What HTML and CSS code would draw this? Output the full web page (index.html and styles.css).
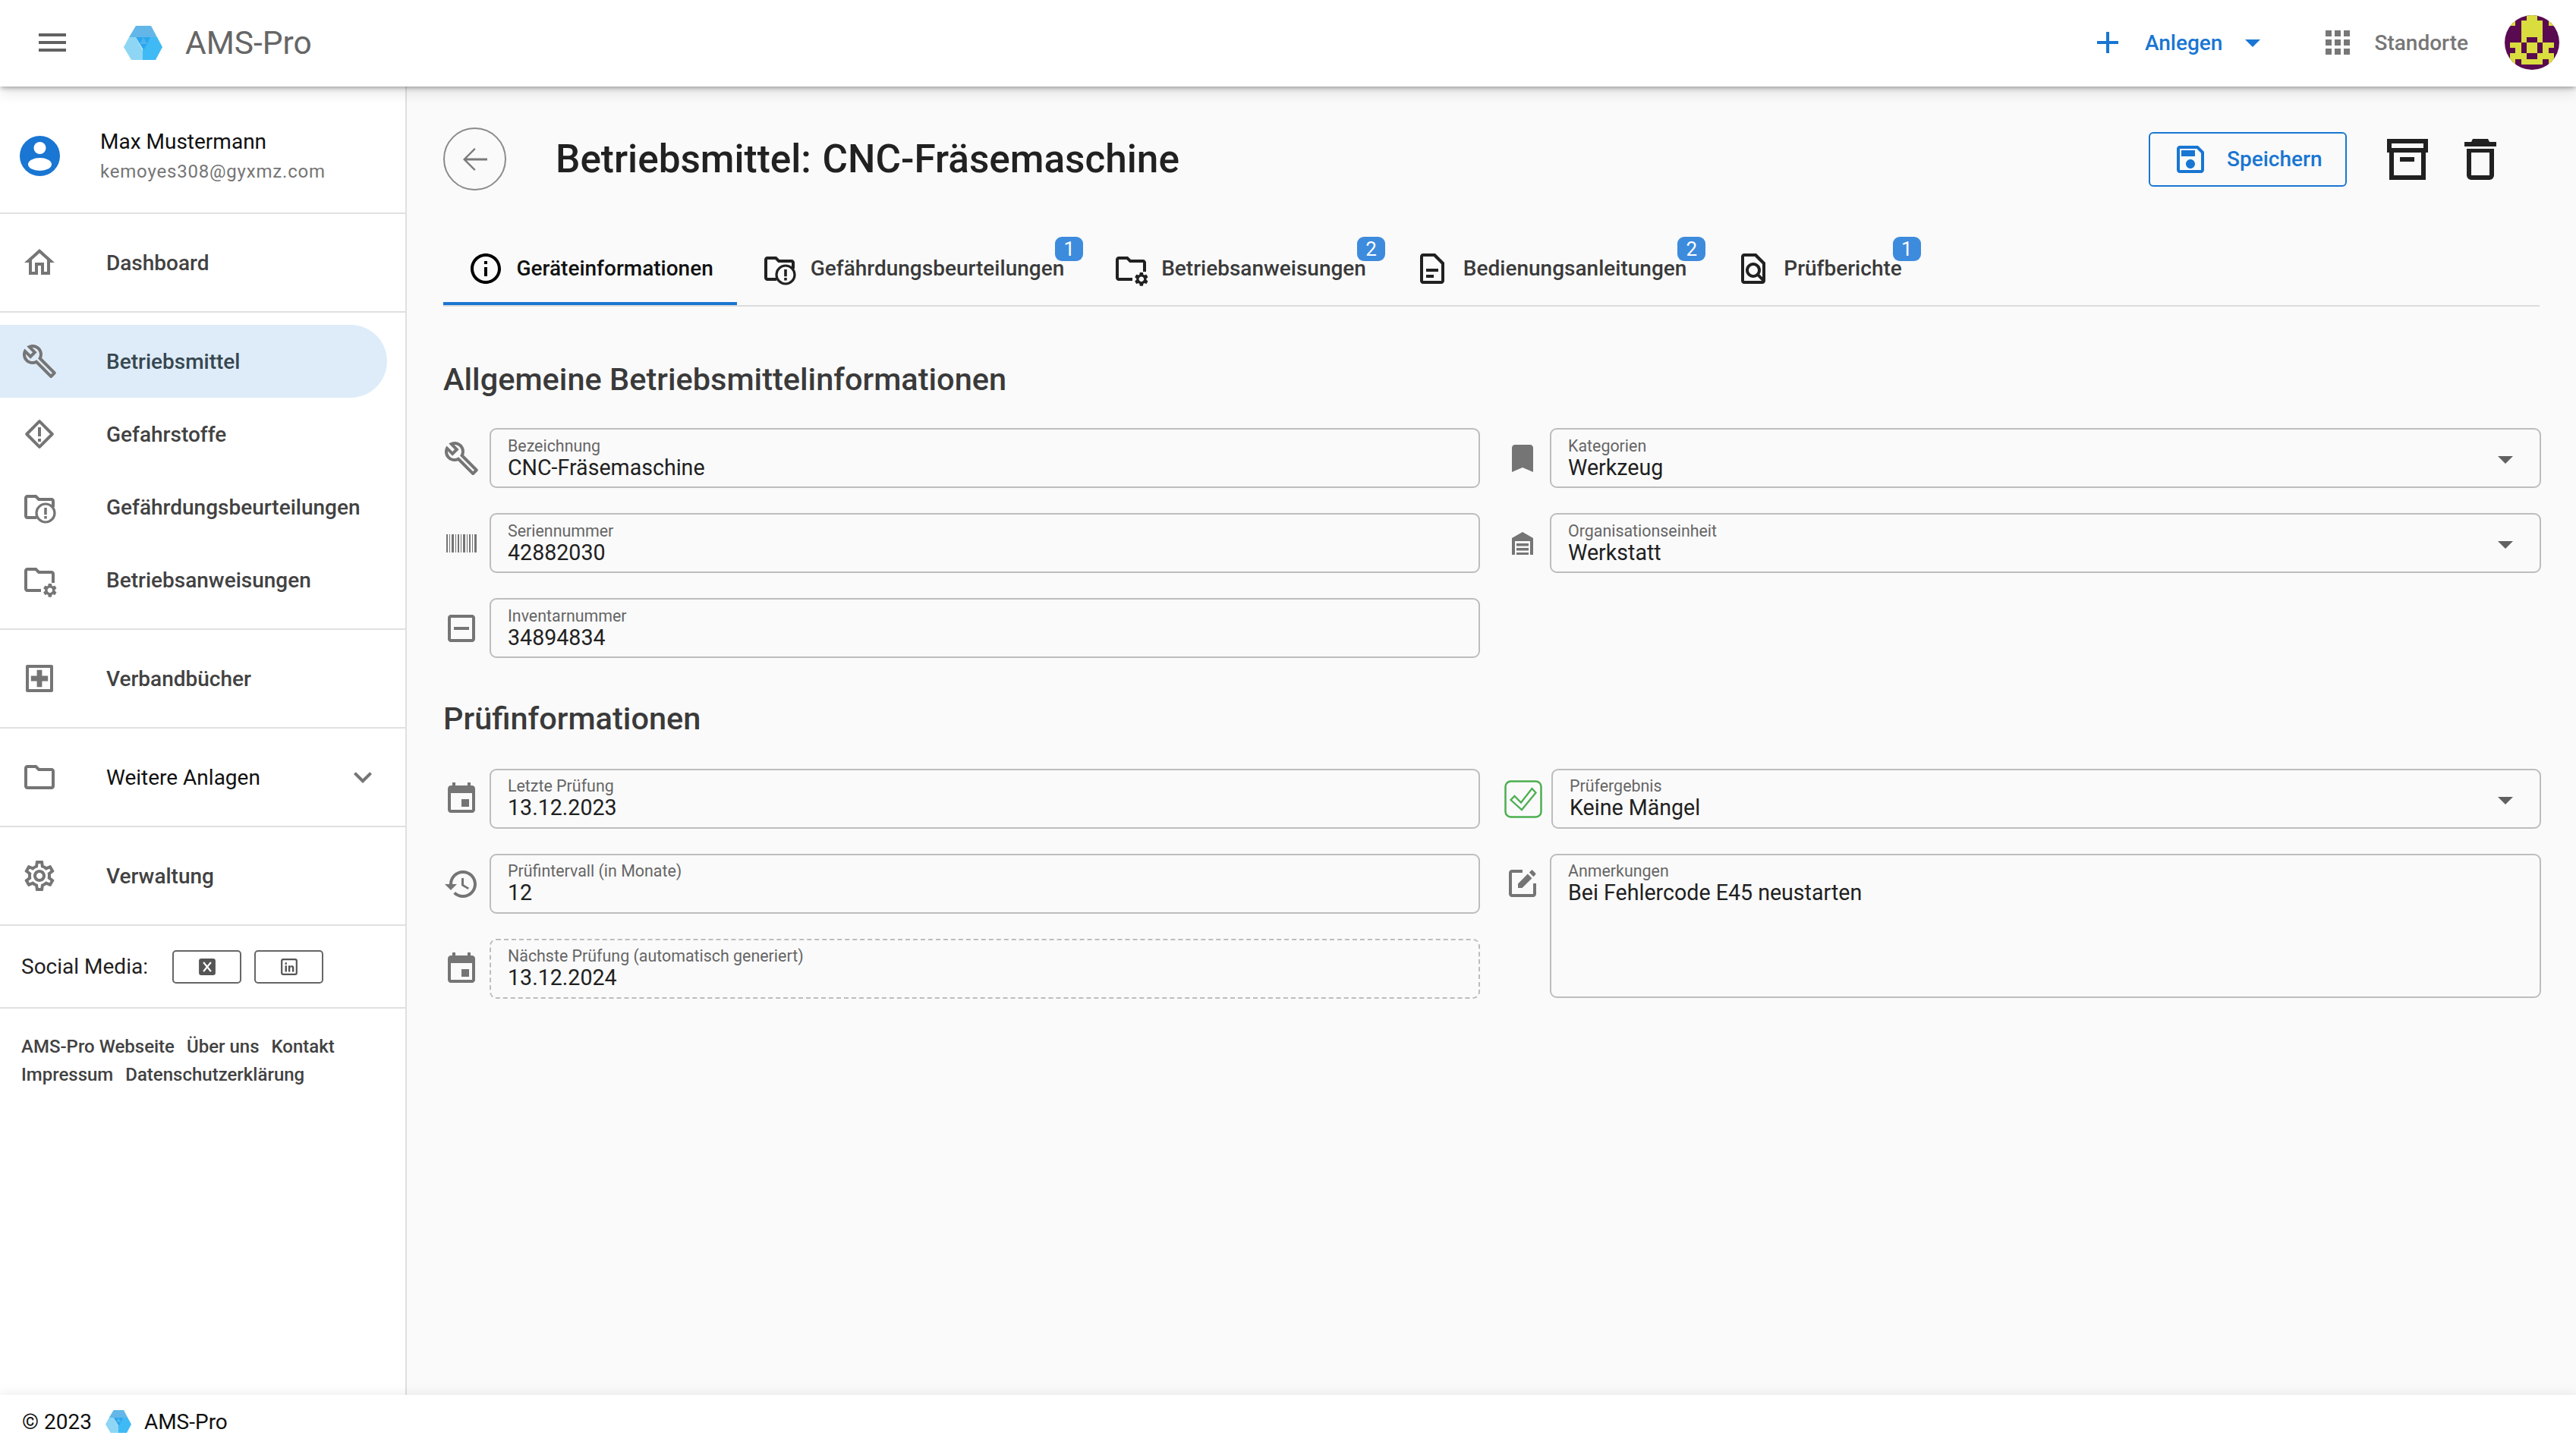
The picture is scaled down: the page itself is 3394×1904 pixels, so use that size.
FILE: index.html
```html
<!DOCTYPE html>
<html lang="de">
<head>
<meta charset="utf-8">
<title>AMS-Pro</title>
<link rel="stylesheet" href="styles.css">
</head>
<body>
<svg class="defs" aria-hidden="true">
  <symbol id="i-logo" viewBox="0 0 51 45">
    <polygon points="16,0 36,0 44,15 7,15" fill="#62b7e8"/>
    <polygon points="7,15 16,15 25,32 25,45 10,45 0,28" fill="#8ed6f4"/>
    <polygon points="44,15 36,15 25,32 25,45 42,45 51,28" fill="#3fbaf5"/>
    <polygon points="16,15 36,15 26,32" fill="#2ba6ef"/>
    <polygon points="26,15 31,24 21,24" fill="#4db4ee"/>
  </symbol>
  <symbol id="i-build" viewBox="0 0 24 24"><path d="M22.61 18.99l-9.08-9.08c.93-2.34.45-5.1-1.44-7C9.79.61 6.21.4 3.66 2.26L7.5 6.11 6.08 7.52 2.25 3.69C.39 6.23.6 9.82 2.9 12.11c1.86 1.86 4.57 2.35 6.89 1.48l9.11 9.11c.39.39 1.02.39 1.41 0l2.3-2.3c.4-.38.4-1.01 0-1.41zm-3 1.6l-9.46-9.46c-.61.45-1.29.72-2 .82-1.36.2-2.79-.21-3.83-1.25C3.37 9.76 2.93 8.5 3 7.26l3.09 3.09 4.24-4.24-3.09-3.09c1.24-.07 2.49.37 3.44 1.31 1.08 1.08 1.49 2.57 1.24 3.96-.12.71-.42 1.37-.88 1.96l9.45 9.45-.88.88z"/></symbol>
  <symbol id="i-folder-alert" viewBox="0 0 24 24">
    <path d="M9.17 6l2 2H20v4h2V8c0-1.1-.9-2-2-2h-8l-2-2H4c-1.1 0-1.99.9-1.99 2L2 18c0 1.1.9 2 2 2h6v-2H4V6h5.17z"/>
    <circle cx="16" cy="16" r="6" fill="none" stroke="currentColor" stroke-width="1.6"/>
    <path d="M15.1 12.5h1.8v4.6h-1.8zM15.1 18h1.8v1.7h-1.8z"/>
  </symbol>
  <symbol id="i-folder-gear" viewBox="0 0 24 24">
    <path d="M9.17 6l2 2H20v6h2V8c0-1.1-.9-2-2-2h-8l-2-2H4c-1.1 0-1.99.9-1.99 2L2 18c0 1.1.9 2 2 2h9v-2H4V6h5.17z"/>
    <path transform="translate(13.4 13.4) scale(.46)" d="M19.14 12.94c.04-.3.06-.61.06-.94 0-.32-.02-.64-.07-.94l2.03-1.58c.18-.14.23-.41.12-.61l-1.92-3.32c-.12-.22-.37-.29-.59-.22l-2.39.96c-.5-.38-1.03-.7-1.62-.94l-.36-2.54c-.04-.24-.24-.41-.48-.41h-3.84c-.24 0-.43.17-.47.41l-.36 2.54c-.59.24-1.13.57-1.62.94l-2.39-.96c-.22-.08-.47 0-.59.22L2.74 8.87c-.12.21-.08.47.12.61l2.03 1.58c-.05.3-.09.63-.09.94s.02.64.07.94l-2.03 1.58c-.18.14-.23.41-.12.61l1.92 3.32c.12.22.37.29.59.22l2.39-.96c.5.38 1.03.7 1.62.94l.36 2.54c.05.24.24.41.48.41h3.84c.24 0 .44-.17.47-.41l.36-2.54c.59-.24 1.13-.56 1.62-.94l2.39.96c.22.08.47 0 .59-.22l1.92-3.32c.12-.22.07-.47-.12-.61l-2.01-1.58zM12 15.6c-1.98 0-3.6-1.62-3.6-3.6s1.62-3.6 3.6-3.6 3.6 1.62 3.6 3.6-1.62 3.6-3.6 3.6z"/>
  </symbol>
  <symbol id="i-calendar" viewBox="0 0 24 24"><path d="M17 12h-5v5h5v-5zM16 1v2H8V1H6v2H5c-1.11 0-1.99.9-1.99 2L3 19c0 1.1.89 2 2 2h14c1.1 0 2-.9 2-2V5c0-1.1-.9-2-2-2h-1V1h-2zm3 18H5V8h14v11z"/></symbol>
  <symbol id="i-drop" viewBox="0 0 24 24"><path d="M7 10l5 5 5-5z"/></symbol>
</svg>

<div class="app">
  <header class="topbar">
    <svg class="icon topbar-menu" viewBox="0 0 24 24"><path d="M3 18h18v-2H3v2zm0-5h18v-2H3v2zm0-7v2h18V6H3z"/></svg>
    <svg class="logo"><use href="#i-logo"/></svg>
    <span class="brand">AMS-Pro</span>
    <div class="create">
      <svg class="icon" viewBox="0 0 24 24"><path d="M19 13h-6v6h-2v-6H5v-2h6V5h2v6h6v2z"/></svg>
      <span class="create-label">Anlegen</span>
      <svg class="icon"><use href="#i-drop"/></svg>
    </div>
    <div class="places">
      <svg class="icon" viewBox="0 0 24 24"><path d="M4 8h4V4H4v4zm6 12h4v-4h-4v4zm-6 0h4v-4H4v4zm0-6h4v-4H4v4zm6 0h4v-4h-4v4zm6-10v4h4V4h-4zm-6 4h4V4h-4v4zm6 6h4v-4h-4v4zm0 6h4v-4h-4v4z"/></svg>
      <span>Standorte</span>
    </div>
    <svg class="avatar" viewBox="0 0 10 10" shape-rendering="crispEdges">
      <rect width="10" height="10" fill="#5a0a50"/>
      <path fill="#d9dd3e" d="M4 0h2v1h-2zM1 1h1v1h-1zM3 1h4v3h-4zM8 1h1v1h-1zM3 4h1v1h-1zM6 4h1v1h-1zM1 5h2v1h-2zM4 5h2v2h-2zM7 5h2v1h-2zM2 6h1v1h-1zM7 6h1v1h-1zM1 7h3v1h-3zM6 7h3v1h-3zM0 8h2v1h-2zM3 8h4v1h-4zM8 8h2v1h-2z"/>
    </svg>
  </header>

  <div class="middle">
    <aside class="sidebar">
      <div class="profile">
        <svg class="profile-icon" viewBox="0 0 53 53">
          <circle cx="26.5" cy="26.5" r="26.5" fill="#1976d2"/>
          <circle cx="26.5" cy="16" r="8" fill="#fff"/>
          <ellipse cx="26.5" cy="37.5" rx="15.5" ry="8.5" fill="#fff"/>
        </svg>
        <div class="profile-text">
          <div class="profile-name">Max Mustermann</div>
          <div class="profile-mail">kemoyes308@gyxmz.com</div>
        </div>
      </div>

      <nav class="nav-group">
        <a class="nav-item"><svg class="icon" viewBox="0 0 24 24"><path d="M12 5.69l5 4.5V18h-2v-6H9v6H7v-7.81l5-4.5M12 3L2 12h3v8h6v-6h2v6h6v-8h3L12 3z"/></svg><span>Dashboard</span></a>
      </nav>
      <nav class="nav-group">
        <a class="nav-item is-active"><svg class="icon icon-wrench"><use href="#i-build"/></svg><span>Betriebsmittel</span></a>
        <a class="nav-item"><svg class="icon" viewBox="0 0 24 24"><path d="M12 3.6 20.4 12 12 20.4 3.6 12z" fill="none" stroke="currentColor" stroke-width="2" stroke-linejoin="round"/><path d="M11 7.5h2v6h-2zM11 15h2v2h-2z"/></svg><span>Gefahrstoffe</span></a>
        <a class="nav-item"><svg class="icon"><use href="#i-folder-alert"/></svg><span>Gefährdungsbeurteilungen</span></a>
        <a class="nav-item"><svg class="icon"><use href="#i-folder-gear"/></svg><span>Betriebsanweisungen</span></a>
      </nav>
      <nav class="nav-group">
        <a class="nav-item"><svg class="icon" viewBox="0 0 24 24"><path d="M20 3H4c-.6 0-1 .4-1 1v16c0 .6.4 1 1 1h16c.6 0 1-.4 1-1V4c0-.6-.4-1-1-1zm-1 16H5V5h14v14z"/><path d="M10.3 6.4h3.4v3.9h3.9v3.4h-3.9v3.9h-3.4v-3.9H6.4v-3.4h3.9z"/></svg><span>Verbandbücher</span></a>
      </nav>
      <nav class="nav-group">
        <a class="nav-item is-plain"><svg class="icon" viewBox="0 0 24 24"><path d="M9.17 6l2 2H20v10H4V6h5.17M10 4H4c-1.1 0-1.99.9-1.99 2L2 18c0 1.1.9 2 2 2h16c1.1 0 2-.9 2-2V8c0-1.1-.9-2-2-2h-8l-2-2z"/></svg><span>Weitere Anlagen</span>
          <svg class="icon nav-chevron" viewBox="0 0 24 24"><path d="M16.59 8.59L12 13.17 7.41 8.59 6 10l6 6 6-6z"/></svg></a>
      </nav>
      <nav class="nav-group">
        <a class="nav-item"><svg class="icon" viewBox="0 0 24 24"><path d="M19.43 12.98c.04-.32.07-.64.07-.98 0-.34-.03-.66-.07-.98l2.11-1.65c.19-.15.24-.42.12-.64l-2-3.46c-.09-.16-.26-.25-.44-.25-.06 0-.12.01-.17.03l-2.49 1c-.52-.4-1.08-.73-1.69-.98l-.38-2.65C14.46 2.18 14.25 2 14 2h-4c-.25 0-.46.18-.49.42l-.38 2.65c-.61.25-1.17.59-1.69.98l-2.49-1c-.06-.02-.12-.03-.18-.03-.17 0-.34.09-.43.25l-2 3.46c-.13.22-.07.49.12.64l2.11 1.65c-.04.32-.07.65-.07.98 0 .33.03.66.07.98l-2.11 1.65c-.19.15-.24.42-.12.64l2 3.46c.09.16.26.25.44.25.06 0 .12-.01.17-.03l2.49-1c.52.4 1.08.73 1.69.98l.38 2.65c.03.24.24.42.49.42h4c.25 0 .46-.18.49-.42l.38-2.65c.61-.25 1.17-.59 1.69-.98l2.49 1c.06.02.12.03.18.03.17 0 .34-.09.43-.25l2-3.46c.12-.22.07-.49-.12-.64l-2.11-1.65zm-1.98-1.71c.04.31.05.52.05.73 0 .21-.02.43-.05.73l-.14 1.13.89.7 1.08.84-.7 1.21-1.27-.51-1.04-.42-.9.68c-.43.32-.84.56-1.25.73l-1.06.43-.16 1.13-.2 1.35h-1.4l-.19-1.35-.16-1.13-1.06-.43c-.43-.18-.83-.41-1.23-.71l-.91-.7-1.06.43-1.27.51-.7-1.21 1.08-.84.89-.7-.14-1.13c-.03-.31-.05-.54-.05-.74s.02-.43.05-.73l.14-1.13-.89-.7-1.08-.84.7-1.21 1.27.51 1.04.42.9-.68c.43-.32.84-.56 1.25-.73l1.06-.43.16-1.13.2-1.35h1.39l.19 1.35.16 1.13 1.06.43c.43.18.83.41 1.23.71l.91.7 1.06-.43 1.27-.51.7 1.21-1.07.85-.89.7.14 1.13zM12 8c-2.21 0-4 1.79-4 4s1.79 4 4 4 4-1.79 4-4-1.79-4-4-4zm0 6c-1.1 0-2-.9-2-2s.9-2 2-2 2 .9 2 2-.9 2-2 2z"/></svg><span>Verwaltung</span></a>
      </nav>

      <div class="social">
        <span class="social-label">Social Media:</span>
        <span class="social-btn"><svg class="social-icon" viewBox="0 0 22 22"><rect x="1" y="1" width="20" height="20" rx="3" fill="#555"/><path d="M6.5 5.5 15.5 16.5M15.5 5.5 6.5 16.5" stroke="#fff" stroke-width="2"/></svg></span>
        <span class="social-btn"><svg class="social-icon" viewBox="0 0 22 22"><rect x="2" y="2" width="18" height="18" rx="2" fill="none" stroke="#555" stroke-width="2"/><path d="M6 9.5h2.2V17H6zM6 5.8h2.2V8H6zM10 9.5h2.2v1c.5-.7 1.3-1.2 2.2-1.2 1.7 0 2.4 1.1 2.4 2.9V17h-2.2v-4.4c0-.9-.3-1.4-1.1-1.4-.8 0-1.3.6-1.3 1.5V17H10z" fill="#555"/></svg></span>
      </div>
      <div class="links">
        <div class="links-line"><span>AMS-Pro Webseite</span><span>Über uns</span><span>Kontakt</span></div>
        <div class="links-line"><span>Impressum</span><span>Datenschutzerklärung</span></div>
      </div>
    </aside>

    <main class="content">
      <div class="toolbar">
        <span class="back"><svg class="icon" viewBox="0 0 24 24"><path d="M20 11.3H6.4l5.9-5.9-.8-.9L4 12l7.5 7.5.8-.9-5.9-5.9H20z"/></svg></span>
        <h1 class="title">Betriebsmittel: CNC-Fräsemaschine</h1>
        <button class="save" type="button">
          <svg class="icon" viewBox="0 0 24 24"><path d="M17 3H5c-1.11 0-2 .9-2 2v14c0 1.1.89 2 2 2h14c1.1 0 2-.9 2-2V7l-4-4zm2 16H5V5h11.17L19 7.83V19zm-7-7c-1.66 0-3 1.34-3 3s1.34 3 3 3 3-1.34 3-3-1.34-3-3-3zM6 6h9v4H6z"/></svg>
          <span>Speichern</span>
        </button>
        <svg class="tool-archive" viewBox="0 0 54 54"><path fill-rule="evenodd" d="M0 0H54V18H51V54H3V18H0ZM6 6V12H48V6ZM9 18V48H45V18Z"/><path d="M17 24H36V30H17Z"/></svg>
        <svg class="tool-trash" viewBox="0 0 42 54"><path d="M11 0H31L33 4H42V10H0V4H9Z"/><path fill-rule="evenodd" d="M3 13H39V48A6 6 0 0 1 33 54H9A6 6 0 0 1 3 48ZM9 18V48H33V18Z"/></svg>
      </div>

      <div class="tabs">
        <div class="tab is-active"><svg class="icon" viewBox="0 0 24 24"><path d="M11 7h2v2h-2zm0 4h2v6h-2zm1-9C6.48 2 2 6.48 2 12s4.48 10 10 10 10-4.48 10-10S17.52 2 12 2zm0 18c-4.41 0-8-3.59-8-8s3.59-8 8-8 8 3.59 8 8-3.59 8-8 8z"/></svg><span>Geräteinformationen</span></div>
        <div class="tab"><svg class="icon"><use href="#i-folder-alert"/></svg><span>Gefährdungsbeurteilungen</span><b class="badge">1</b></div>
        <div class="tab"><svg class="icon"><use href="#i-folder-gear"/></svg><span>Betriebsanweisungen</span><b class="badge">2</b></div>
        <div class="tab"><svg class="icon" viewBox="0 0 24 24"><path d="M14 2H6c-1.1 0-2 .9-2 2v16c0 1.1.89 2 1.99 2H18c1.1 0 2-.9 2-2V8l-6-6zm4 18H6V4h7l5 5v11z"/><path d="M8 12h8v2H8zM8 16h5v2H8z"/></svg><span>Bedienungsanleitungen</span><b class="badge">2</b></div>
        <div class="tab"><svg class="icon" viewBox="0 0 24 24"><path d="M14 2H6c-1.1 0-2 .9-2 2v16c0 1.1.9 2 2 2h12c1.1 0 2-.9 2-2V8l-6-6zM6 4h7l5 5v8.58l-1.84-1.84c1.28-1.94 1.07-4.57-.64-6.28C14.55 8.49 13.28 8 12 8s-2.55.49-3.53 1.46c-1.95 1.95-1.95 5.12 0 7.07.98.97 2.25 1.46 3.53 1.46.96 0 1.92-.28 2.75-.83L17.6 20H6V4zm8.11 11.1c-.56.56-1.31.88-2.11.88s-1.55-.31-2.11-.88c-.56-.56-.88-1.31-.88-2.11s.31-1.55.88-2.11c.56-.57 1.31-.88 2.11-.88s1.55.31 2.11.88c.56.56.88 1.31.88 2.11s-.31 1.55-.88 2.11z"/></svg><span>Prüfberichte</span><b class="badge">1</b></div>
      </div>

      <section class="section">
        <h2 class="section-title">Allgemeine Betriebsmittelinformationen</h2>
        <div class="form-grid">
          <div class="form-col">
            <div class="row">
              <svg class="icon icon-wrench"><use href="#i-build"/></svg>
              <div class="field"><label class="field-label">Bezeichnung</label><div class="field-value">CNC-Fräsemaschine</div></div>
            </div>
            <div class="row">
              <svg class="icon" viewBox="0 0 48 48"><path d="M4 12h2v24H4zM8 12h1v24H8zM11 12h3v24h-3zM16 12h1v24h-1zM19 12h2v24h-2zM23 12h1v24h-1zM26 12h3v24h-3zM31 12h1v24h-1zM34 12h2v24h-2zM38 12h1v24h-1zM41 12h3v24h-3z"/></svg>
              <div class="field"><label class="field-label">Seriennummer</label><div class="field-value">42882030</div></div>
            </div>
            <div class="row">
              <svg class="icon" viewBox="0 0 24 24"><path d="M19 3H5c-1.1 0-2 .9-2 2v14c0 1.1.9 2 2 2h14c1.1 0 2-.9 2-2V5c0-1.1-.9-2-2-2zm0 16H5V5h14v14zM7 11h10v2H7z"/></svg>
              <div class="field"><label class="field-label">Inventarnummer</label><div class="field-value">34894834</div></div>
            </div>
          </div>
          <div class="form-col form-col-right">
            <div class="row">
              <svg class="icon" viewBox="0 0 24 24"><path d="M17 3H7c-1.1 0-1.99.9-1.99 2L5 21l7-3 7 3V5c0-1.1-.9-2-2-2z"/></svg>
              <div class="field"><label class="field-label">Kategorien</label><div class="field-value">Werkzeug</div><svg class="icon field-arrow"><use href="#i-drop"/></svg></div>
            </div>
            <div class="row">
              <svg class="icon" viewBox="0 0 24 24"><path d="M12 4.5 19 8.5V19.5H17V10.5H7V19.5H5V8.5z"/><path d="M8 12h8v1.8H8zM8 15h8v1.8H8zM8 18h8v1.5H8z"/></svg>
              <div class="field"><label class="field-label">Organisationseinheit</label><div class="field-value">Werkstatt</div><svg class="icon field-arrow"><use href="#i-drop"/></svg></div>
            </div>
          </div>
        </div>
      </section>

      <section class="section section-next">
        <h2 class="section-title">Prüfinformationen</h2>
        <div class="form-grid">
          <div class="form-col">
            <div class="row">
              <svg class="icon"><use href="#i-calendar"/></svg>
              <div class="field field-tight"><label class="field-label">Letzte Prüfung</label><div class="field-value">13.12.2023</div></div>
            </div>
            <div class="row">
              <svg class="icon" viewBox="0 0 24 24"><path d="M13 3c-4.97 0-9 4.03-9 9H1l3.89 3.89.07.14L9 12H6c0-3.87 3.13-7 7-7s7 3.13 7 7-3.13 7-7 7c-1.93 0-3.68-.79-4.94-2.06l-1.42 1.42C8.27 19.99 10.51 21 13 21c4.97 0 9-4.03 9-9s-4.03-9-9-9zm-1 5v5l4.28 2.54.72-1.21-3.5-2.08V8H12z"/></svg>
              <div class="field field-tight"><label class="field-label">Prüfintervall (in Monate)</label><div class="field-value">12</div></div>
            </div>
            <div class="row">
              <svg class="icon"><use href="#i-calendar"/></svg>
              <div class="field field-tight field-dashed"><label class="field-label">Nächste Prüfung (automatisch generiert)</label><div class="field-value">13.12.2024</div></div>
            </div>
          </div>
          <div class="form-col form-col-right">
            <div class="row">
              <svg class="result-check" viewBox="0 0 50 50"><rect x="1.5" y="1.5" width="47" height="47" rx="7" fill="none" stroke="#4caf50" stroke-width="2.5"/><path d="M8.5 26 13.5 21 22 29.5 36.5 11 41.5 16.5 23 39z" fill="none" stroke="#4caf50" stroke-width="2.3"/></svg>
              <div class="field field-tight field-shift"><label class="field-label">Prüfergebnis</label><div class="field-value">Keine Mängel</div><svg class="icon field-arrow"><use href="#i-drop"/></svg></div>
            </div>
            <div class="row row-top">
              <svg class="icon" viewBox="0 0 24 24"><path d="M3 5v14c0 1.1.9 2 2 2h14c1.1 0 2-.9 2-2v-7h-2v7H5V5h7V3H5c-1.1 0-2 .9-2 2z"/><path d="M9 15h2.8l6.4-6.4-2.8-2.8L9 12.2zM19.2 7.6l1.3-1.3c.3-.3.3-.8 0-1.1L18.8 3.500c-.3-.3-.8-.3-1.1 0l-1.3 1.300z"/></svg>
              <div class="field field-tight field-area"><label class="field-label">Anmerkungen</label><div class="field-value">Bei Fehlercode E45 neustarten</div></div>
            </div>
          </div>
        </div>
      </section>
    </main>
  </div>

  <footer class="footer">
    <span>© 2023</span>
    <svg class="footer-logo"><use href="#i-logo"/></svg>
    <span>AMS-Pro</span>
  </footer>
</div>
</body>
</html>
```

FILE: styles.css
```css
* { box-sizing: border-box; }
html, body { margin: 0; padding: 0; background: #fff; }
body { font-family: Roboto, "Liberation Sans", sans-serif; font-size: 28px; color: #212121; }
.defs { display: none; }
.app { width: 3394px; height: 1904px; display: flex; flex-direction: column; overflow: hidden; }
.icon { width: 48px; height: 48px; flex: none; fill: currentColor; display: block; }

/* top bar */
.topbar { position: relative; z-index: 2; height: 114px; flex: none; display: flex; align-items: center; padding: 0 22px 2px 45px; background: #fff; box-shadow: 0 3px 6px -1px rgba(0,0,0,.32), 0 8px 18px rgba(0,0,0,.1); }
.topbar-menu { color: #616161; }
.logo { width: 51px; height: 45px; margin-left: 70px; flex: none; }
.brand { margin-left: 30px; font-size: 42.5px; color: #666; }
.create { margin-left: auto; display: flex; align-items: center; color: #1976d2; font-weight: 500; }
.create-label { margin: 0 16px 0 25px; }
.places { display: flex; align-items: center; gap: 24px; margin-left: 64px; color: #777; font-weight: 500; }
.avatar { width: 72px; height: 72px; border-radius: 50%; margin-left: 48px; flex: none; }

.middle { flex: 1; display: flex; min-height: 0; }

/* sidebar */
.sidebar { width: 536px; flex: none; background: #fff; border-right: 2px solid #e0e0e0; }
.profile { height: 168px; padding: 16px 0 0 26px; display: flex; align-items: center; gap: 53px; border-bottom: 2px solid #e0e0e0; }
.profile-icon { width: 53px; height: 53px; flex: none; }
.profile-text { padding-top: 2px; }
.profile-name { line-height: 40px; color: #111; }
.profile-mail { line-height: 38px; font-size: 24px; letter-spacing: .8px; color: #757575; }
.nav-group { padding: 16px 0; border-bottom: 2px solid #e0e0e0; }
.nav-item { height: 96px; margin-right: 24px; padding-left: 28px; display: flex; align-items: center; gap: 64px; font-weight: 500; color: #424242; border-radius: 0 48px 48px 0; }
.nav-item .icon { color: #757575; }
.nav-item.is-active { background: #deecf9; color: #37474f; }
.nav-item.is-plain { font-weight: 400; color: #111; }
.nav-item .nav-chevron { margin-left: auto; margin-right: 8px; }
.social { height: 109px; padding-left: 28px; display: flex; align-items: center; border-bottom: 2px solid #e0e0e0; }
.social-label { width: 199px; color: #222; }
.social-btn { width: 91px; height: 44px; margin-right: 17px; display: flex; align-items: center; justify-content: center; border: 2px solid #666; border-radius: 5px; }
.social-icon { width: 24px; height: 24px; display: block; }
.links { padding: 32px 0 0 28px; font-size: 24px; line-height: 37px; font-weight: 500; color: #424242; }
.links-line { display: flex; gap: 16px; }

/* content */
.content { flex: 1; min-width: 0; padding: 54px 48px 0; background: #fafafa; }
.toolbar { height: 83px; display: flex; align-items: center; padding-right: 57px; }
.back { width: 83px; height: 83px; flex: none; display: flex; align-items: center; justify-content: center; border: 2px solid #8a8a8a; border-radius: 50%; color: #7a7a7a; }
.title { margin: 0 0 0 65px; font-size: 51.3px; line-height: 60px; font-weight: 500; word-spacing: 2px; color: #212121; }
.save { margin-left: auto; width: 261px; height: 72px; padding: 0 0 0 29px; display: flex; align-items: center; gap: 24px; background: transparent; border: 2.5px solid #1976d2; border-radius: 6px; color: #1976d2; font: 500 28px Roboto, sans-serif; }
.tool-archive { width: 54px; height: 54px; margin-left: 53px; fill: #212121; flex: none; }
.tool-trash { width: 42px; height: 54px; margin-left: 48px; fill: #212121; flex: none; }

.tabs { display: flex; height: 99px; margin: 54px 0 70px; border-bottom: 2px solid #dcdcdc; }
.tab { position: relative; display: flex; align-items: center; gap: 16.5px; padding: 0 31.4px 0 32px; font-weight: 500; color: #3a3a3a; }
.tab .icon { color: #212121; }
.tab.is-active { color: #111; }
.tab.is-active .icon { color: #000; }
.tab.is-active::after { content: ""; position: absolute; left: 0; right: 0; bottom: 0; height: 4px; background: #1976d2; }
.badge { position: absolute; top: 7px; right: 6.4px; width: 37px; height: 32px; display: flex; align-items: center; justify-content: center; background: #3d8bdd; border-radius: 9px; color: #fff; font-size: 26px; font-weight: 400; }

.section-next { margin-top: 54px; }
.section-next .section-title { margin-bottom: 40px; }
.section-title { margin: 0 0 38px; font-size: 41.5px; line-height: 52px; font-weight: 500; color: #3a3a3a; }
.form-grid { display: grid; grid-template-columns: 1fr 1fr; column-gap: 30px; }
.form-col { display: flex; flex-direction: column; gap: 33px; }
.form-col-right { padding-left: 2px; margin-right: -2px; }
.form-col-right .row { gap: 12px; }
.row { display: flex; align-items: center; gap: 13px; }
.row .icon { color: #757575; }
.row-top { align-items: flex-start; }
.row-top > .icon { margin-top: 15px; }
.field { position: relative; flex: 1; min-width: 0; height: 79px; padding: 10px 60px 0 22px; border: 2px solid #bdbdbd; border-radius: 9px; }
.field-tight { padding-top: 9px; }
.field-dashed { border-style: dashed; }
.field-area { height: 190px; }
.field-shift { margin-left: 1px; }
.field-label { display: block; font-size: 21.4px; line-height: 23px; color: #666; }
.field-value { font-size: 28.6px; line-height: 34px; color: #212121; }
.row .field-arrow { position: absolute; top: 15px; right: 21px; color: #616161; }
.result-check { width: 50px; height: 50px; flex: none; margin-right: -1px; }

/* footer */
.footer { position: relative; z-index: 1; height: 66px; flex: none; display: flex; align-items: center; padding: 4px 0 0 29px; background: #fff; box-shadow: 0 -2px 14px rgba(0,0,0,.08); color: #111; }
.footer-logo { width: 34px; height: 30px; margin: 0 17px 0 18px; flex: none; }
```
